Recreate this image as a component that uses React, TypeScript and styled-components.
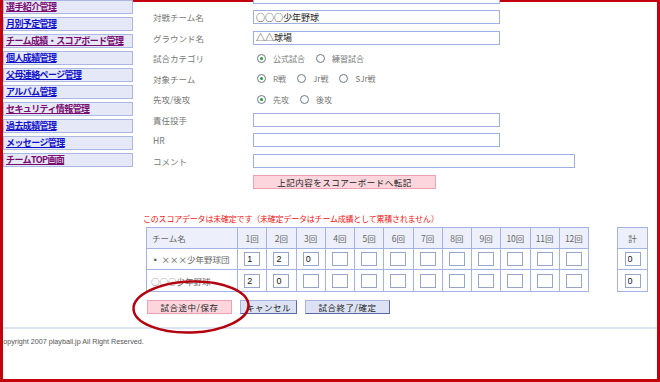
import React from "react";
import styled, { createGlobalStyle } from "styled-components";

const GlobalStyle = createGlobalStyle`
  body {
    margin: 0;
    background: #fff;
    font-family: "Noto Sans CJK JP", "Noto Sans", sans-serif;
  }
`;

const Frame = styled.div`
  position: relative;
  width: 660px;
  height: 382px;
  box-sizing: border-box;
  border: 3px solid #c2000e;
  border-top: none;
  background: linear-gradient(#c2000e 0 2px, #fff 2px);
  overflow: hidden;
  font-family: "Noto Sans CJK JP", "Noto Sans", sans-serif;
`;

const TopSection = styled.div`
  display: flex;
  align-items: flex-start;
`;

const Sidebar = styled.nav`
  width: 131px;
  display: flex;
  flex-direction: column;
  gap: 3px;
`;

const MenuItem = styled.a<{ $visited?: boolean }>`
  display: block;
  width: 130px;
  height: 14px;
  box-sizing: border-box;
  border: 1px solid #a9b7e2;
  background: #e4e8f7;
  padding-left: 2px;
  font-size: 9px;
  font-weight: bold;
  line-height: 12px;
  letter-spacing: -0.6px;
  white-space: nowrap;
  color: ${(p) => (p.$visited ? "#7a0a6e" : "#1010cc")};
  text-decoration: underline;
`;

const Main = styled.div`
  flex: 1;
`;

const Form = styled.div`
  display: grid;
  grid-template-columns: 100px 1fr;
  grid-auto-rows: 20.5px;
  align-items: center;
  margin-top: -13.75px;
  padding-left: 19px;
`;

const Label = styled.span`
  font-size: 8.5px;
  color: #777;
  white-space: nowrap;
`;

const TextInput = styled.input<{ $w: number }>`
  display: block;
  width: ${(p) => p.$w}px;
  height: 14px;
  box-sizing: border-box;
  margin: 0;
  padding: 0 2px;
  border: 1px solid #9eb0e2;
  background: #fff;
  font-family: inherit;
  font-size: 9px;
  color: #222;
  outline: none;
`;

const RadioGroup = styled.div`
  display: flex;
  align-items: center;
  padding-left: 4px;
`;

const RadioOption = styled.label`
  display: flex;
  align-items: center;
  gap: 7px;
  margin-right: 11px;
  font-size: 8px;
  color: #777;
  white-space: nowrap;
`;

const Circle = styled.span`
  width: 9px;
  height: 9px;
  box-sizing: border-box;
  border-radius: 50%;
  border: 1px solid #6c7888;
  background: #fff;
  display: flex;
  align-items: center;
  justify-content: center;
`;

const Dot = styled.span`
  width: 3px;
  height: 3px;
  border-radius: 50%;
  background: #1f9c3a;
`;

const TransferRow = styled.div`
  display: flex;
  padding-left: 119px;
  margin-top: 4px;
`;

const Button = styled.button<{ $w: number; $tone: "pink" | "blue" }>`
  width: ${(p) => p.$w}px;
  height: 14px;
  box-sizing: border-box;
  margin: 0;
  padding: 0;
  border: 1px solid;
  border-color: ${(p) =>
    p.$tone === "pink"
      ? "#eda3b4"
      : "#a8b4dc #5a6aa0 #5a6aa0 #a8b4dc"};
  background: ${(p) => (p.$tone === "pink" ? "#fcd5dd" : "#dce2f4")};
  font-family: inherit;
  font-size: 8.5px;
  line-height: 12px;
  letter-spacing: 0.5px;
  color: #222;
  white-space: nowrap;
`;

const ScoreSection = styled.div`
  padding-left: 140px;
  margin-top: 24px;
`;

const Warning = styled.div`
  font-size: 8px;
  line-height: 12px;
  letter-spacing: -0.2px;
  color: #f01414;
  white-space: nowrap;
`;

const Tables = styled.div`
  display: flex;
  gap: 28px;
  margin-top: 2px;
  margin-left: 3px;
  align-items: flex-start;
`;

const ScoreTable = styled.table<{ $w: number }>`
  border-collapse: collapse;
  table-layout: fixed;
  width: ${(p) => p.$w}px;
`;

const Th = styled.th<{ $left?: boolean }>`
  height: 20px;
  padding: 0 0 0 ${(p) => (p.$left ? "5px" : "0")};
  background: #edf0fb;
  border: 1px solid #a3b3e3;
  font-size: 8.5px;
  font-weight: normal;
  color: #666;
  text-align: ${(p) => (p.$left ? "left" : "center")};
  white-space: nowrap;
`;

const Td = styled.td<{ $left?: boolean }>`
  height: 20.5px;
  padding: 0 0 0 ${(p) => (p.$left ? "4px" : "0")};
  border: 1px solid #a3b3e3;
  background: #fff;
  font-size: 8.5px;
  color: #666;
  text-align: ${(p) => (p.$left ? "left" : "center")};
  white-space: nowrap;
`;

const CellInput = styled.input`
  display: block;
  margin: 0 auto;
  width: 16px;
  height: 14px;
  box-sizing: border-box;
  padding: 0 0 0 2px;
  border: 1px solid #97a5c9;
  background: #fff;
  font-family: "Liberation Sans", sans-serif;
  font-size: 9px;
  color: #111;
  outline: none;
`;

const ActionRow = styled.div`
  display: flex;
  gap: 8px;
  margin-top: 8px;
  margin-left: 4px;
`;

const Footer = styled.div`
  margin-top: 13px;
  border-top: 2px solid #dbe3f4;
  padding-top: 7px;
`;

const Copyright = styled.div`
  margin-left: -5px;
  font-family: "Liberation Sans", Arial, sans-serif;
  font-size: 7.2px;
  line-height: 12px;
  color: #555;
  white-space: nowrap;
`;

const Ellipse = styled.svg`
  position: absolute;
  left: 128px;
  top: 280px;
  width: 120px;
  height: 54px;
  overflow: visible;
  pointer-events: none;
`;

const menu = [
  { label: "選手紹介管理", visited: true },
  { label: "月別予定管理", visited: false },
  { label: "チーム成績・スコアボード管理", visited: true },
  { label: "個人成績管理", visited: false },
  { label: "父母連絡ページ管理", visited: false },
  { label: "アルバム管理", visited: false },
  { label: "セキュリティ情報管理", visited: true },
  { label: "過去成績管理", visited: false },
  { label: "メッセージ管理", visited: false },
  { label: "チームTOP画面", visited: true },
];

const radio = (options: string[], checked: number) => (
  <RadioGroup>
    {options.map((o, i) => (
      <RadioOption key={o}>
        <Circle>{i === checked && <Dot />}</Circle>
        {o}
      </RadioOption>
    ))}
  </RadioGroup>
);

const teams = [
  { name: "▪ ×××少年野球団", scores: ["1", "2", "0"], total: "0" },
  { name: "○○○少年野球", scores: ["2", "0"], total: "0" },
];

const innings = Array.from({ length: 12 }, (_, i) => i + 1);

const App: React.FC = () => {
  return (
    <>
      <GlobalStyle />
      <Frame>
        <TopSection>
          <Sidebar>
            {menu.map((m) => (
              <MenuItem key={m.label} href="#" $visited={m.visited}>
                {m.label}
              </MenuItem>
            ))}
          </Sidebar>
          <Main>
            <Form>
              <Label />
              <TextInput $w={247} defaultValue="" />
              <Label>対戦チーム名</Label>
              <TextInput $w={247} defaultValue="○○○少年野球" />
              <Label>グラウンド名</Label>
              <TextInput $w={247} defaultValue="△△球場" />
              <Label>試合カテゴリ</Label>
              {radio(["公式試合", "練習試合"], 0)}
              <Label>対象チーム</Label>
              {radio(["R戦", "Jr戦", "SJr戦"], 0)}
              <Label>先攻/後攻</Label>
              {radio(["先攻", "後攻"], 0)}
              <Label>責任投手</Label>
              <TextInput $w={247} defaultValue="" />
              <Label>HR</Label>
              <TextInput $w={247} defaultValue="" />
              <Label>コメント</Label>
              <TextInput $w={322} defaultValue="" />
            </Form>
            <TransferRow>
              <Button $w={183} $tone="pink">
                上記内容をスコアーボードへ転記
              </Button>
            </TransferRow>
          </Main>
        </TopSection>

        <ScoreSection>
          <Warning>
            このスコアデータは未確定です（未確定データはチーム成績として累積されません）
          </Warning>
          <Tables>
            <ScoreTable $w={443}>
              <colgroup>
                <col style={{ width: 91 }} />
                {innings.map((n) => (
                  <col key={n} />
                ))}
              </colgroup>
              <thead>
                <tr>
                  <Th $left>チーム名</Th>
                  {innings.map((n) => (
                    <Th key={n}>{n}回</Th>
                  ))}
                </tr>
              </thead>
              <tbody>
                {teams.map((t) => (
                  <tr key={t.name}>
                    <Td $left>{t.name}</Td>
                    {innings.map((n) => (
                      <Td key={n}>
                        <CellInput defaultValue={t.scores[n - 1] ?? ""} />
                      </Td>
                    ))}
                  </tr>
                ))}
              </tbody>
            </ScoreTable>
            <ScoreTable $w={31}>
              <thead>
                <tr>
                  <Th>計</Th>
                </tr>
              </thead>
              <tbody>
                {teams.map((t) => (
                  <tr key={t.name}>
                    <Td>
                      <CellInput defaultValue={t.total} />
                    </Td>
                  </tr>
                ))}
              </tbody>
            </ScoreTable>
          </Tables>
          <ActionRow>
            <Button $w={85} $tone="pink">試合途中/保存</Button>
            <Button $w={57} $tone="blue">キャンセル</Button>
            <Button $w={85} $tone="blue">試合終了/確定</Button>
          </ActionRow>
        </ScoreSection>

        <Footer>
          <Copyright>Copyright 2007 playball.jp All Right Reserved.</Copyright>
        </Footer>

        <Ellipse viewBox="0 0 120 54">
          <ellipse
            cx="60"
            cy="27"
            rx="57.5"
            ry="25.5"
            fill="none"
            stroke="#b3000f"
            strokeWidth="2.5"
            transform="rotate(-2 60 27)"
          />
        </Ellipse>
      </Frame>
    </>
  );
};

export default App;
